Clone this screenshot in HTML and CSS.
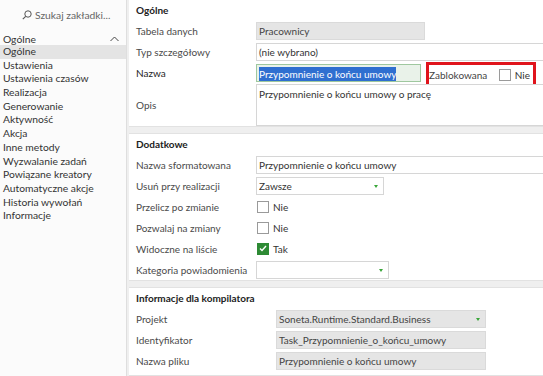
FILE: index.html
```html
<!DOCTYPE html>
<html lang="pl">
<head>
    <meta charset="UTF-8">
    <title>Zadanie</title>
    <link rel="stylesheet" href="styles.css">
</head>
<body>
    <div class="app">
        <aside class="sidebar">
            <div class="search">
                <svg width="10" height="10" viewBox="0 0 10 10"><circle cx="6" cy="4" r="3.2" fill="none" stroke="#555" stroke-width="1"/><line x1="3.7" y1="6.3" x2="0.8" y2="9.2" stroke="#555" stroke-width="1.1"/></svg>
                <span>Szukaj zakładki...</span>
            </div>
            <div class="group-title">
                <span>Ogólne</span>
                <svg width="9" height="6" viewBox="0 0 9 6"><polyline points="0.5,5 4.5,1 8.5,5" fill="none" stroke="#444" stroke-width="1"/></svg>
            </div>
            <ul class="nav">
                <li class="active">Ogólne</li>
                <li>Ustawienia</li>
                <li>Ustawienia czasów</li>
                <li>Realizacja</li>
                <li>Generowanie</li>
                <li>Aktywność</li>
                <li>Akcja</li>
                <li>Inne metody</li>
                <li>Wyzwalanie zadań</li>
                <li>Powiązane kreatory</li>
                <li>Automatyczne akcje</li>
                <li>Historia wywołań</li>
                <li>Informacje</li>
            </ul>
        </aside>

        <main class="main">
            <!-- Ogólne -->
            <section class="panel">
                <h2 class="panel-title">Ogólne</h2>
                <div class="row">
                    <label>Tabela danych</label>
                    <div class="field readonly w-169">Pracownicy</div>
                </div>
                <div class="row">
                    <label>Typ szczegółowy</label>
                    <div class="field full">(nie wybrano)</div>
                </div>
                <div class="row">
                    <label class="strong">Nazwa</label>
                    <div class="field focused w-165"><span class="selected">Przypomnienie o końcu umowy</span></div>
                    <div class="locked">
                        <span>Zablokowana</span>
                        <span class="check-wrap"><span class="checkbox"></span>Nie</span>
                    </div>
                </div>
                <div class="row row-tall">
                    <label>Opis</label>
                    <div class="field full textarea">Przypomnienie o końcu umowy o pracę</div>
                </div>
            </section>

            <!-- Dodatkowe -->
            <section class="panel">
                <h2 class="panel-title">Dodatkowe</h2>
                <div class="row">
                    <label>Nazwa sformatowana</label>
                    <div class="field full">Przypomnienie o końcu umowy</div>
                </div>
                <div class="row">
                    <label>Usuń przy realizacji</label>
                    <div class="field select w-128">Zawsze<span class="arrow"></span></div>
                </div>
                <div class="row">
                    <label>Przelicz po zmianie</label>
                    <span class="check-wrap"><span class="checkbox"></span>Nie</span>
                </div>
                <div class="row">
                    <label>Pozwalaj na zmiany</label>
                    <span class="check-wrap"><span class="checkbox"></span>Nie</span>
                </div>
                <div class="row">
                    <label>Widoczne na liście</label>
                    <span class="check-wrap"><span class="checkbox checked"><svg width="8" height="7" viewBox="0 0 8 7"><polyline points="1,3.5 3,5.5 7,1" fill="none" stroke="#fff" stroke-width="1.4"/></svg></span>Tak</span>
                </div>
                <div class="row">
                    <label>Kategoria powiadomienia</label>
                    <div class="field select w-133"><span class="arrow"></span></div>
                </div>
            </section>

            <!-- Informacje dla kompilatora -->
            <section class="panel panel-last">
                <h2 class="panel-title">Informacje dla kompilatora</h2>
                <div class="row wide">
                    <label>Projekt</label>
                    <div class="field readonly select w-210">Soneta.Runtime.Standard.Business<span class="arrow"></span></div>
                </div>
                <div class="row wide">
                    <label>Identyfikator</label>
                    <div class="field readonly w-210">Task_Przypomnienie_o_końcu_umowy</div>
                </div>
                <div class="row wide">
                    <label>Nazwa pliku</label>
                    <div class="field readonly w-210">Przypomnienie o końcu umowy</div>
                </div>
            </section>
        </main>
    </div>
</body>
</html>
```

FILE: styles.css
```css
* {
    margin: 0;
    padding: 0;
    box-sizing: border-box;
}

body {
    font-family: Lato, 'Liberation Sans', sans-serif;
    font-size: 10px;
    color: #333;
    background: #fff;
    overflow: hidden;
}

.app {
    display: flex;
    height: 376px;
}

/* Sidebar */
.sidebar {
    width: 127px;
    flex-shrink: 0;
    background: #fbfbfb;
    border-right: 1px solid #dedede;
    font-size: 10.3px;
}

.search {
    height: 33px;
    display: flex;
    align-items: center;
    padding-left: 22px;
    gap: 3px;
    color: #666;
    padding-bottom: 4px;
}

.group-title {
    height: 12px;
    display: flex;
    align-items: center;
    justify-content: space-between;
    padding: 0 7px 0 3px;
    color: #333;
}

.nav {
    list-style: none;
}

.nav li {
    height: 13.7px;
    line-height: 13.7px;
    padding-left: 3px;
    color: #333;
}

.nav li.active {
    background: #e4e4e4;
}

/* Main */
.main {
    flex: 1;
    background: #efefef;
    padding: 0 0 0 2px;
    display: flex;
    flex-direction: column;
    gap: 6px;
}

.panel {
    background: #fff;
    padding: 0 0 0 7px;
    border-top: 1px solid #e2e2e2;
    border-bottom: 1px solid #e2e2e2;
}

.panel:first-child {
    border-top: none;
}

.panel-last {
    flex: 1;
}

.panel-title {
    font-size: 10px;
    font-weight: bold;
    color: #222;
    height: 20px;
    line-height: 20px;
}

.row {
    height: 21px;
    display: flex;
    align-items: center;
}

.row-tall {
    height: 43px;
    align-items: stretch;
}

.row-tall label {
    display: flex;
    align-items: center;
}

.row label {
    width: 120px;
    flex-shrink: 0;
    color: #4a4a4a;
}

.row.wide label {
    width: 140px;
}

.row label.strong {
    color: #1e1e1e;
}

.field {
    height: 18px;
    line-height: 16px;
    border: 1px solid #d6d6d6;
    padding: 0 2px;
    background: #fff;
    color: #333;
    position: relative;
    white-space: nowrap;
    overflow: hidden;
}

.field.full {
    flex: 1;
    border-right: none;
}

.field.readonly {
    background: #e5e5e5;
    border-color: #dadada;
    color: #444;
}

.field.focused {
    background: #e9f2e9;
    border-color: #9fc89f;
    padding-top: 1px;
}

.selected {
    background: #2f6fd0;
    color: #fff;
    display: inline-block;
    line-height: 14px;
}

.field.textarea {
    height: 42px;
    margin-top: 1px;
    padding-top: 1px;
}

.field.select .arrow {
    position: absolute;
    right: 5px;
    top: 7px;
    border-left: 2.5px solid transparent;
    border-right: 2.5px solid transparent;
    border-top: 3px solid #3aa63a;
}

.w-128 { width: 128px; }
.w-133 { width: 133px; }
.w-165 { width: 165px; }
.w-169 { width: 169px; }
.w-210 { width: 210px; }

.locked {
    width: 110px;
    height: 25px;
    margin-left: 5px;
    margin-top: 4px;
    border: 3px solid #e0141c;
    display: flex;
    align-items: center;
    justify-content: space-between;
    padding: 0 3px 0 0;
    color: #444;
}

.check-wrap {
    display: inline-flex;
    align-items: center;
    gap: 4px;
    color: #333;
}

.checkbox {
    width: 12px;
    height: 12px;
    border: 1px solid #9a9a9a;
    background: #fff;
    display: inline-flex;
    align-items: center;
    justify-content: center;
}

.checkbox.checked {
    background: #2d8a34;
    border-color: #2d8a34;
}

.row > .check-wrap {
    margin-left: 1px;
}
```
